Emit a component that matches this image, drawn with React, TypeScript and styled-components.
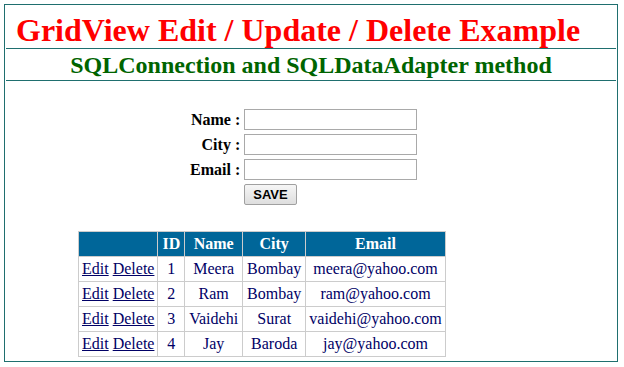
import React from 'react';
import styled, { createGlobalStyle } from 'styled-components';

const GlobalStyle = createGlobalStyle`
  body {
    margin: 0;
    background: #ffffff;
    font-family: "Liberation Serif", "Times New Roman", serif;
  }
`;

const Frame = styled.div`
  margin: 4px 0 0 4px;
  width: 610px;
  height: 356px;
  border: 1px solid #1f6f6f;
  box-sizing: content-box;
  padding: 0 1px;
`;

const Title = styled.h1`
  margin: 0;
  padding: 8px 0 0 10px;
  height: 35px;
  color: #ff0000;
  font-size: 32px;
  line-height: 35px;
  font-weight: bold;
`;

const Rule = styled.hr`
  margin: 0;
  border: none;
  border-top: 1px solid #1f6f6f;
  height: 0;
`;

const SubTitle = styled.h2`
  margin: 0;
  height: 31px;
  color: #006400;
  font-size: 24px;
  line-height: 33px;
  text-align: center;
  font-weight: bold;
`;

const FormTable = styled.table`
  margin: 25px 0 0 181px;
  border-collapse: separate;
  border-spacing: 2px;
`;

const Label = styled.td`
  font-size: 16px;
  font-weight: bold;
  text-align: right;
  padding: 0 1px;
  color: #000;
`;

const InputCell = styled.td`
  padding: 1px;
`;

const TextBox = styled.input`
  width: 173px;
  height: 21px;
  box-sizing: border-box;
  border: 1px solid #a9a9a9;
  padding: 1px 2px;
  font-size: 13px;
`;

const SaveButton = styled.button`
  height: 21px;
  padding: 0 8px;
  font-family: "Liberation Sans", Arial, sans-serif;
  font-weight: bold;
  font-size: 13px;
  color: #000;
  border: 1px solid #a0a0a0;
  border-radius: 2px;
  background: linear-gradient(#f6f6f6, #dedede);
`;

const Grid = styled.table`
  margin: 23px 0 0 72px;
  border-collapse: collapse;
  border: 1px solid #cccccc;
  font-size: 16px;
`;

const HeadCell = styled.th<{ $tight?: boolean }>`
  background: #006699;
  color: #ffffff;
  font-weight: bold;
  height: 24px;
  padding: 0 ${p => (p.$tight ? '3px' : '4px')};
  border: 1px solid #cccccc;
  text-align: center;
`;

const Cell = styled.td<{ $left?: boolean; $tight?: boolean }>`
  color: #000066;
  height: 24px;
  padding: 0 ${p => (p.$tight || p.$left ? '3px' : '4px')};
  border: 1px solid #cccccc;
  text-align: ${p => (p.$left ? 'left' : 'center')};
  white-space: nowrap;
`;

const GridLink = styled.a`
  color: #000066;
  text-decoration: underline;
  cursor: pointer;
`;

const rows = [
  { id: 1, name: 'Meera', city: 'Bombay', email: 'meera@yahoo.com' },
  { id: 2, name: 'Ram', city: 'Bombay', email: 'ram@yahoo.com' },
  { id: 3, name: 'Vaidehi', city: 'Surat', email: 'vaidehi@yahoo.com' },
  { id: 4, name: 'Jay', city: 'Baroda', email: 'jay@yahoo.com' },
];

function App() {
  return (
    <>
      <GlobalStyle />
      <Frame>
        <Title>GridView Edit / Update / Delete Example</Title>
        <Rule />
        <SubTitle>SQLConnection and SQLDataAdapter method</SubTitle>
        <Rule />

        <FormTable>
          <tbody>
            <tr>
              <Label>Name :</Label>
              <InputCell><TextBox type="text" /></InputCell>
            </tr>
            <tr>
              <Label>City :</Label>
              <InputCell><TextBox type="text" /></InputCell>
            </tr>
            <tr>
              <Label>Email :</Label>
              <InputCell><TextBox type="text" /></InputCell>
            </tr>
            <tr>
              <Label />
              <InputCell><SaveButton>SAVE</SaveButton></InputCell>
            </tr>
          </tbody>
        </FormTable>

        <Grid>
          <thead>
            <tr>
              <HeadCell $tight>&nbsp;</HeadCell>
              <HeadCell>ID</HeadCell>
              <HeadCell>Name</HeadCell>
              <HeadCell>City</HeadCell>
              <HeadCell $tight>Email</HeadCell>
            </tr>
          </thead>
          <tbody>
            {rows.map(r => (
              <tr key={r.id}>
                <Cell $left>
                  <GridLink>Edit</GridLink> <GridLink>Delete</GridLink>
                </Cell>
                <Cell>{r.id}</Cell>
                <Cell>{r.name}</Cell>
                <Cell>{r.city}</Cell>
                <Cell $tight>{r.email}</Cell>
              </tr>
            ))}
          </tbody>
        </Grid>
      </Frame>
    </>
  );
}

export default App;
